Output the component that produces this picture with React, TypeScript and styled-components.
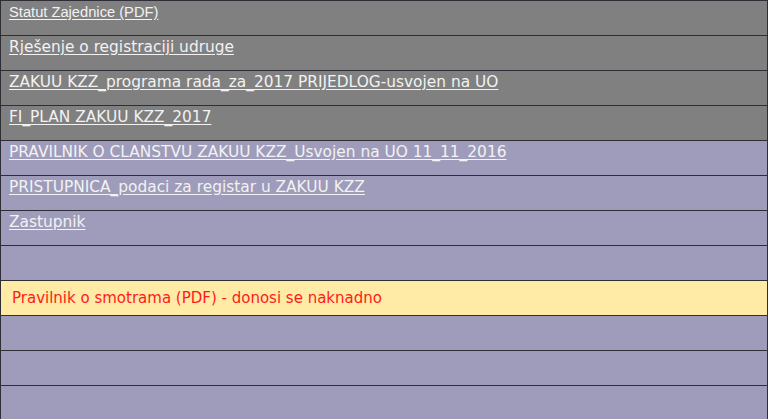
import React, { FC } from 'react';
import styled, { createGlobalStyle } from 'styled-components';

const GlobalStyle = createGlobalStyle`
    html, body {
        margin: 0;
        padding: 0;
        background: #ffffff;
    }
`;

type Tone = 'gray' | 'lilac' | 'note';

const tones: Record<Tone, string> = {
    gray: '#808080',
    lilac: '#9f9cbb',
    note: '#ffeaa6',
};

const StyledTable = styled.div`
    width: 768px;
    box-sizing: border-box;
    border: 1px solid #2e2e36;
    border-bottom: none;
    display: flex;
    flex-direction: column;
`;

const StyledRow = styled.div<{ $tone: Tone; $center?: boolean }>`
    height: 35px;
    box-sizing: border-box;
    border-bottom: 1px solid #2e2e36;
    background: ${({ $tone }) => tones[$tone]};
    display: flex;
    align-items: ${({ $center }) => ($center ? 'center' : 'flex-start')};
    padding: ${({ $center }) => ($center ? '0 11px' : '2px 8px 0')};
`;

const StyledLink = styled.a<{ $arial?: boolean }>`
    color: #f2f2f2;
    text-decoration: underline;
    text-underline-offset: 2px;
    font-family: ${({ $arial }) => ($arial ? '"Liberation Sans", Arial, sans-serif' : '"DejaVu Sans", Verdana, sans-serif')};
    font-size: ${({ $arial }) => ($arial ? '14.7px' : '15.4px')};
    line-height: 18px;
`;

const StyledNote = styled.span`
    color: #ff1a1a;
    font-family: 'DejaVu Sans', Verdana, sans-serif;
    font-size: 15px;
    line-height: 18px;
`;

type Item = { tone: Tone; label?: string; arial?: boolean; note?: boolean };

const items: Item[] = [
    { tone: 'gray', label: 'Statut Zajednice (PDF)', arial: true },
    { tone: 'gray', label: 'Rješenje o registraciji udruge' },
    { tone: 'gray', label: 'ZAKUU KZZ_programa rada_za_2017 PRIJEDLOG-usvojen na UO' },
    { tone: 'gray', label: 'FI_PLAN ZAKUU KZZ_2017' },
    { tone: 'lilac', label: 'PRAVILNIK O CLANSTVU ZAKUU KZZ_Usvojen na UO 11_11_2016' },
    { tone: 'lilac', label: 'PRISTUPNICA_podaci za registar u ZAKUU KZZ' },
    { tone: 'lilac', label: 'Zastupnik' },
    { tone: 'lilac' },
    { tone: 'note', label: 'Pravilnik o smotrama (PDF) - donosi se naknadno', note: true },
    { tone: 'lilac' },
    { tone: 'lilac' },
    { tone: 'lilac' },
];

const App: FC = () => {
    return (
        <>
            <GlobalStyle />
            <StyledTable>
                {items.map((item, i) => (
                    <StyledRow key={i} $tone={item.tone} $center={item.note}>
                        {item.note ? (
                            <StyledNote>{item.label}</StyledNote>
                        ) : (
                            item.label && (
                                <StyledLink href="#" $arial={item.arial}>
                                    {item.label}
                                </StyledLink>
                            )
                        )}
                    </StyledRow>
                ))}
            </StyledTable>
        </>
    );
};

export default App;
